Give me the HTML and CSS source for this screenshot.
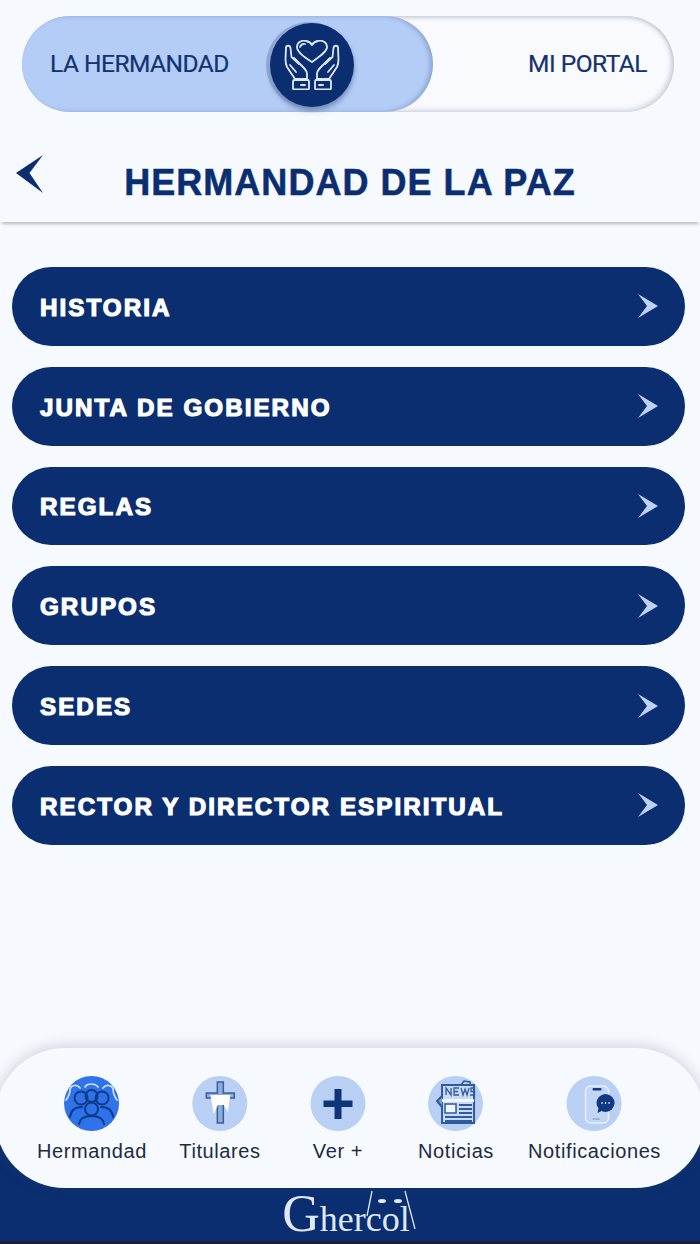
FILE: index.html
```html
<!DOCTYPE html>
<html lang="es">
<head>
<meta charset="utf-8">
<title>Hermandad de la Paz</title>
<link rel="stylesheet" href="styles.css">
</head>
<body>
<div class="page">
  <div class="toggle">
    <div class="toggle-on">
      <span class="toggle-label">LA HERMANDAD</span>
      <span class="knob">
        <svg class="knob-icon" viewBox="0 0 56 50" fill="none" stroke="#dfe9fa" stroke-width="1.800" stroke-linejoin="round" stroke-linecap="round">
          <path d="M28 22C18 16 13 11 13 7C13 2 18 0 22 1C25 1.500 27 3 28 5C29 3 31 1.500 34 1C38 0 43 2 43 7C43 11 38 15 28 22Z"/>
          <path d="M16 7C17 4.500 19 3.500 21 4"/>
          <path d="M23 39V34C23 30 20 28 17 25L10 18M23 39H11L3 27C1.500 24 1.500 22 1.500 19L2 8C2 5 6 5 6.500 8L7.500 17L15 24M6 25L12 32"/>
          <rect x="9" y="40" width="16" height="9.500" rx="1.500"/>
          <path d="M17 45H21"/>
          <path d="M33 39V34C33 30 36 28 39 25L46 18M33 39H45L53 27C54.500 24 54.500 22 54.500 19L54 8C54 5 50 5 49.500 8L48.500 17L41 24M50 25L44 32"/>
          <rect x="31" y="40" width="16" height="9.500" rx="1.500"/>
          <path d="M35 45H39"/>
        </svg>
      </span>
    </div>
    <span class="toggle-label toggle-off">MI PORTAL</span>
  </div>

  <header class="head">
    <svg class="back" viewBox="0 0 27 38"><polygon points="27,0 0,18 27,38 13.500,18"/></svg>
    <h1 class="title">HERMANDAD DE LA PAZ</h1>
  </header>

  <main class="menu">
    <a class="item"><span class="item-text">HISTORIA</span><svg class="arrow" viewBox="0 0 20 24"><polygon points="0,0 20,12 0,24 9,12"/></svg></a>
    <a class="item"><span class="item-text">JUNTA DE GOBIERNO</span><svg class="arrow" viewBox="0 0 20 24"><polygon points="0,0 20,12 0,24 9,12"/></svg></a>
    <a class="item"><span class="item-text">REGLAS</span><svg class="arrow" viewBox="0 0 20 24"><polygon points="0,0 20,12 0,24 9,12"/></svg></a>
    <a class="item"><span class="item-text">GRUPOS</span><svg class="arrow" viewBox="0 0 20 24"><polygon points="0,0 20,12 0,24 9,12"/></svg></a>
    <a class="item"><span class="item-text">SEDES</span><svg class="arrow" viewBox="0 0 20 24"><polygon points="0,0 20,12 0,24 9,12"/></svg></a>
    <a class="item"><span class="item-text">RECTOR Y DIRECTOR ESPIRITUAL</span><svg class="arrow" viewBox="0 0 20 24"><polygon points="0,0 20,12 0,24 9,12"/></svg></a>
  </main>

  <nav class="nav">
    <a class="tab tab-1">
      <span class="disc disc-on">
        <svg class="glyph" viewBox="0 0 55 55" fill="none" stroke-width="1.700" stroke-linecap="round">
          <g stroke="#cfe0fb">
            <path d="M2 24C5 20 6 17 6 13C7 9 13 8 16 12"/>
            <path d="M21 11C23 7 31 7 34 11"/>
            <path d="M39 12C42 8 48 9 49 13C49 17 50 20 53 24"/>
          </g>
          <g stroke="#0f3a86" stroke-width="2">
            <circle cx="17" cy="22" r="6.500"/>
            <circle cx="38" cy="22" r="6.500"/>
            <circle cx="27.500" cy="20" r="6"/>
            <circle cx="27.500" cy="33" r="6.500"/>
            <path d="M15 48C16 41 22 40 27.500 40C33 40 39 41 40 48"/>
            <path d="M6 41C7 33 12 31 18 31"/>
            <path d="M49 41C48 33 43 31 37 31"/>
          </g>
        </svg>
      </span>
      <span class="tab-text">Hermandad</span>
    </a>
    <a class="tab tab-2">
      <span class="disc">
        <svg class="glyph" viewBox="0 0 55 55">
          <path d="M25 6H31V17H42V22H31V47H25V22H14V17H25Z" fill="#8fabd9" stroke="#34609f" stroke-width="1.500"/>
          <path d="M18 19H38L35.500 36L31.500 29H25.500L21.500 38Z" fill="#ffffff"/>
        </svg>
      </span>
      <span class="tab-text">Titulares</span>
    </a>
    <a class="tab tab-3">
      <span class="disc">
        <svg class="glyph" viewBox="0 0 55 55"><path d="M24 13H31V24.500H42V31H31V43H24V31H13V24.500H24Z" fill="#0d3578"/></svg>
      </span>
      <span class="tab-text">Ver +</span>
    </a>
    <a class="tab tab-4">
      <span class="disc">
        <svg class="glyph" viewBox="0 0 55 55">
          <path d="M14 9H46V47H14Z" fill="#c9daf6" stroke="#2f5a9d" stroke-width="2"/>
          <path d="M14 20L9 25L14 31" fill="#7f9fd4" stroke="#2f5a9d" stroke-width="2"/>
          <path d="M33 9L36 5L42 6V9" fill="none" stroke="#2f5a9d" stroke-width="1.500"/>
          <rect x="14" y="23" width="32" height="3" fill="#f1f6fe"/>
          <rect x="17" y="28" width="11" height="9" fill="#eef4fe" stroke="#2f5a9d" stroke-width="1.500"/>
          <path d="M31 29H44M31 33H44M31 37H44M17 41H44M17 45H44" stroke="#2f5a9d" stroke-width="2"/>
          <path d="M18 19V12L23 19V12M31 12H26V19H31M26 15.500H30M33 12L35 19L37 13L39 19L41 12M47 12H43V15.500H46.500V19H42" fill="none" stroke="#2f5a9d" stroke-width="1.300"/>
        </svg>
      </span>
      <span class="tab-text">Noticias</span>
    </a>
    <a class="tab tab-5">
      <span class="disc">
        <svg class="glyph" viewBox="0 0 55 55">
          <rect x="19" y="10" width="23" height="37" rx="5" fill="#c2d5f5" stroke="#e6effc" stroke-width="1.500"/>
          <rect x="26" y="12" width="9" height="2.500" rx="1" fill="#143c80"/>
          <path d="M26 43H33" stroke="#6d8fc6" stroke-width="1.200"/>
          <circle cx="39" cy="27" r="9" fill="#0f3a82"/>
          <path d="M32 32L31 37L37 34Z" fill="#0f3a82"/>
          <path d="M35 27H36M38.500 27H39.500M42 27H43" stroke="#ffffff" stroke-width="2"/>
        </svg>
      </span>
      <span class="tab-text">Notificaciones</span>
    </a>
  </nav>

  <footer class="foot">
    <div class="brand">
      <svg class="hood" viewBox="0 0 60 40" fill="none" stroke="#dfe9f7" stroke-width="1.300">
        <path d="M12 2L7 27M45 2L55 40"/>
        <ellipse cx="22" cy="12" rx="4" ry="2" fill="#dfe9f7" stroke="none"/>
        <ellipse cx="38" cy="12" rx="4" ry="2" fill="#dfe9f7" stroke="none"/>
      </svg>
      <span class="brand-cap">G</span><span class="brand-rest">hercol</span>
    </div>
  </footer>
</div>
</body>
</html>
```

FILE: styles.css
```css
* { box-sizing: border-box; }
html, body { margin: 0; padding: 0; }
body { background: #f6f9fe; font-family: "Liberation Sans", Arial, sans-serif; }
.page { width: 700px; height: 1244px; overflow: hidden; display: flex; flex-direction: column; }

.toggle {
  height: 96px; margin: 16px 26px 0 22px; border-radius: 48px; display: flex; align-items: center;
  justify-content: space-between; background: #f8fafe;
  box-shadow: inset 0 2px 4px rgba(90,100,120,.28), inset -3px -2px 5px rgba(90,100,120,.22);
}
.toggle-on {
  width: 411px; height: 96px; border-radius: 48px; background: #b3cdf6; display: flex; align-items: center;
  padding-left: 28px; box-shadow: inset -3px 0 4px rgba(70,90,140,.35);
}
.toggle-label {
  font-family: Roboto, "Liberation Sans", sans-serif; font-size: 24.500px; color: #12336f; letter-spacing: -.5px; white-space: nowrap;
  position: relative; top: -1px; -webkit-text-stroke: .2px #12336f;
}
.toggle-off { margin-right: 27px; }
.knob {
  width: 84px; height: 84px; border-radius: 50%; background: #0a2e70; margin-left: auto; margin-right: 79px;
  display: flex; align-items: center; justify-content: center; flex: none; position: relative; top: 1px;
  box-shadow: -3px 0 0 1px rgba(120,140,185,.55), 0 4px 5px rgba(60,80,130,.5);
}
.knob-icon { width: 56px; height: 50px; }

.head {
  height: 110px; display: grid; grid-template-columns: 1fr auto 1fr; align-items: start; flex: none;
  box-shadow: 0 4px 3px -2px rgba(70,75,90,.35);
}
.back { width: 27px; height: 38px; margin: 43px 0 0 16px; fill: #0a2e70; }
.title {
  grid-column: 2; margin: 51px 0 0; font-size: 36px; line-height: 40px; font-weight: 700; color: #0a2e70;
  letter-spacing: 1.030px; white-space: nowrap; -webkit-text-stroke: .5px #0a2e70;
}

.menu { flex: 1; display: flex; flex-direction: column; gap: 21px; padding: 45px 15px 0 12px; }
.item {
  height: 78.800px; border-radius: 39.400px; background: #0a2e70; display: flex; align-items: center;
  justify-content: space-between; padding: 0 27px 0 28px; color: #fff; flex: none;
}
.item-text {
  font-size: 24.200px; font-weight: 700; letter-spacing: 2.050px; -webkit-text-stroke: 1.200px #fff; padding-top: 3px;
}
.arrow { width: 20px; height: 24px; fill: #bcd2f6; }

.nav {
  position: relative; z-index: 1; height: 140px; margin: 0 -5px 0; border-radius: 70px; background: #f6f9fe;
  box-shadow: 0 -2px 14px rgba(70,75,90,.22); flex: none; display: block;
}
.tab { position: absolute; top: 28px; display: flex; flex-direction: column; align-items: center; transform: translateX(-50%); }
.tab-1 { left: 97px; }
.tab-2 { left: 225px; }
.tab-3 { left: 343px; }
.tab-4 { left: 461px; }
.tab-5 { left: 599.500px; }
.disc { width: 55px; height: 55px; border-radius: 50%; background: #b9cff3; display: block; }
.disc-on { background: #2e73ea; }
.glyph { width: 55px; height: 55px; display: block; }
.tab-text { font-size: 20px; line-height: 24px; margin-top: 8px; color: #1e2b3f; letter-spacing: .6px; white-space: nowrap; }

.foot {
  height: 124px; margin-top: -68px; background: #0a2e70; display: flex; justify-content: center; align-items: flex-end;
  border-bottom: 3px solid #1a2233; flex: none;
}
.brand { position: relative; color: #dfe9f7; font-family: "Liberation Serif", serif; line-height: 1; display: flex; align-items: baseline; padding-bottom: 1px; margin-right: 8px; }
.brand-cap { font-size: 52px; }
.brand-rest { font-size: 36px; }
.hood { position: absolute; right: -10px; bottom: 12px; width: 60px; height: 40px; }
```
